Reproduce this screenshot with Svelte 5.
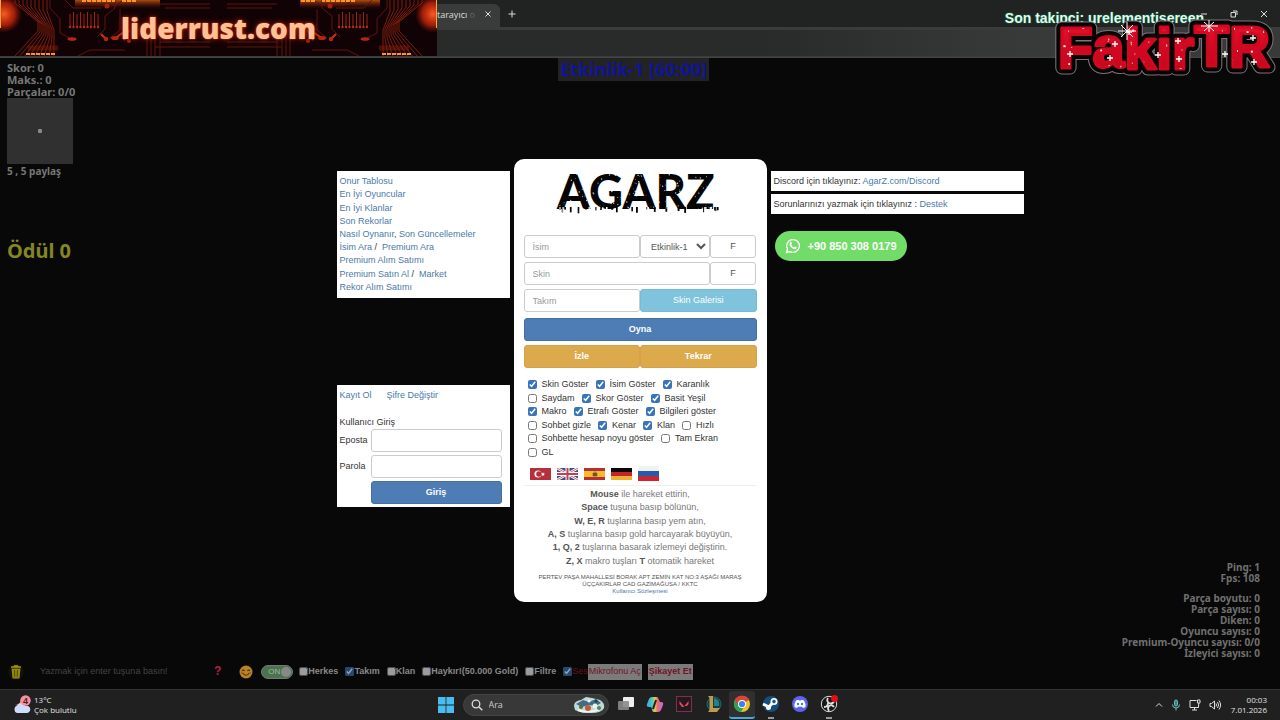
<script>
  const options = [
    [['Skin Göster', true], ['İsim Göster', true], ['Karanlık', true]],
    [['Saydam', false], ['Skor Göster', true], ['Basit Yeşil', true]],
    [['Makro', true], ['Etrafı Göster', true], ['Bilgileri göster', true]],
    [['Sohbet gizle', false], ['Kenar', true], ['Klan', true], ['Hızlı', false]],
    [['Sohbette hesap noyu göster', false], ['Tam Ekran', false]],
    [['GL', false]]
  ];
  const links = [
    [['Onur Tablosu']],
    [['En İyi Oyuncular']],
    [['En İyi Klanlar']],
    [['Son Rekorlar']],
    [['Nasıl Oynanır'], [', '], ['Son Güncellemeler']],
    [['İsim Ara'], [' / \u00a0'], ['Premium Ara']],
    [['Premium Alım Satımı']],
    [['Premium Satın Al'], [' / \u00a0'], ['Market']],
    [['Rekor Alım Satımı']]
  ];
  const help = [
    [['Mouse', 1], [' ile hareket ettirin,']],
    [['Space', 1], [' tuşuna basıp bölünün,']],
    [['W, E, R', 1], [' tuşlarına basıp yem atın,']],
    [['A, S', 1], [' tuşlarına basıp gold harcayarak büyüyün,']],
    [['1, Q, 2', 1], [' tuşlarına basarak izlemeyi değiştirin.']],
    [['Z, X', 1], [' makro tuşları '], ['T', 1], [' otomatik hareket']]
  ];
  const channels = [['Herkes', false], ['Takım', true], ['Klan', false], ['Haykır!(50.000 Gold)', false], ['Filtre', false]];
  const stats = ['Parça boyutu: 0', 'Parça sayısı: 0', 'Diken: 0', 'Oyuncu sayısı: 0', 'Premium-Oyuncu sayısı: 0/0', 'İzleyici sayısı: 0'];

  // Repeatable scatter for the speckled lettering
  function scatter(count, w, h, seed) {
    let s = seed;
    const next = () => (s = (s * 16807) % 2147483647) / 2147483647;
    return Array.from({ length: count }, () => ({ x: next() * w, y: next() * h, r: next() }));
  }
  const grunge = scatter(230, 166, 40, 77);
  const glitter = scatter(110, 214, 54, 421);
  const drips = scatter(46, 160, 6, 913);
  const traces = Array.from({ length: 9 }, (_, i) => i);
  const crosses = [[20, 46], [65, 36], [79, 24], [108, 47], [129, 51], [128, 33], [175, 46], [203, 30], [204, 54], [60, 50]];
</script>

<div class="page">
  <header class="browser">
    <div class="tabs">
      <div class="tab"><span>u tarayıcı <i>o</i></span><button aria-label="Sekmeyi kapat"><svg width="8" height="8" viewBox="0 0 8 8"><path d="M1.5 1.5l5 5m0-5l-5 5" /></svg></button></div>
      <button class="new" aria-label="Yeni sekme"><svg width="8" height="8" viewBox="0 0 8 8"><path d="M4 .5v7M.5 4h7" /></svg></button>
      <div class="window">
        <svg width="8" height="8" viewBox="0 0 8 8"><path d="M1 4h6" /></svg>
        <svg width="8" height="8" viewBox="0 0 8 8"><path d="M1 2.5h4.500v4.500H1zM3 1h4v4" /></svg>
        <svg width="8" height="8" viewBox="0 0 8 8"><path d="M1 1l6 6m0-6L1 7" /></svg>
      </div>
    </div>
    <div class="toolbar"></div>

    <div class="banner">
      <svg width="437" height="56" viewBox="0 0 437 56" aria-hidden="true">
        <defs>
          <radialGradient id="ember"><stop offset="0" stop-color="#ff5b22" /><stop offset=".6" stop-color="#ce2609" stop-opacity=".75" /><stop offset="1" stop-color="#8d1705" stop-opacity="0" /></radialGradient>
          <linearGradient id="glow" x2="0" y2="1"><stop offset="0" stop-color="#ff7418" stop-opacity=".65" /><stop offset="1" stop-color="#821405" stop-opacity="0" /></linearGradient>
        </defs>
        <rect width="437" height="56" fill="#110305" />
        <rect x="75" width="85" height="9" fill="url(#glow)" /><rect x="300" width="80" height="9" fill="url(#glow)" />
        {#each [0, 1] as side}
          <g transform={side ? 'translate(437 0) scale(-1 1)' : ''} fill="none" stroke="#7c1c0c" stroke-width="1">
            {#each traces as i}
              <path d="M{15 + i * 4} 0V{3 + i}L{38 + i * 2} {22 + i}V{31 + i}L{14 + i * 5} 57" />
              <path d="M{70 + i * 3.500} {14 - (i % 2) * 2}V27" stroke="#9c230c" />
              <circle cx={70 + i * 3.500} cy="27" r="1.200" fill="#b92e10" stroke="none" />
            {/each}
            <path d="M65 0l8 8h28M84 0l8 5h24l8-5M50 0v8l10 11v14l12 6M115 0v8l-10 8v13l-8 8M120 9v21l-10 8M147 36v20M151 36v20M155 36v20M160 38v18M160 42h50M155 47h55M160 4h50M165 8h45M125 50H90l-12 6" stroke="#5e140b" />
            <path d="M73 39h-5M106 39l-5-5M114 39l10-7M124 40l5-10" stroke="#c6340e" stroke-width="2" />
            <ellipse cx="72" cy="39" rx="4.500" ry="1.800" fill="#b3280b" stroke="none" />
            <circle cx="106" cy="39" r="2.200" fill="#b3280b" stroke="none" /><ellipse cx="115" cy="38" rx="4" ry="2" fill="#b3280b" stroke="none" />
            <circle cx="129" cy="41" r="2" fill="#a3220b" stroke="none" /><circle cx="107" cy="6" r="2.500" fill="#a3220b" stroke="none" />
            <path d="M82 1h33M122 1h14M26 54h30" stroke="#ff9328" stroke-width="2" stroke-dasharray="4 1" />
            <path d="M28 48h30" stroke="#93200b" stroke-width="5" opacity=".45" />
            <ellipse cx="4" cy="14" rx="18" ry="19" fill="url(#ember)" stroke="none" />
            <path d="M.5 0v28" stroke="#ffa544" />
          </g>
        {/each}
      </svg>
      <strong>liderrust.com</strong>
    </div>
    <p class="follower">Son takipçi: urelementisereen</p>
    <svg class="sign" width="230" height="72" viewBox="0 0 230 72" role="img" aria-label="FakirTR">
      <defs>
        <linearGradient id="redfill" x2="0" y2="1"><stop offset="0" stop-color="#ef1730" /><stop offset=".5" stop-color="#d30822" /><stop offset="1" stop-color="#c0061b" /></linearGradient>
        <clipPath id="signclip"><text x="8" y="60" dy="0 -1 2 0 0 -3 1">FakirTR</text></clipPath>
      </defs>
      <g class="signtext">
        <text x="8" y="60" dy="0 -1 2 0 0 -3 1" stroke="#777" stroke-width="13">FakirTR</text>
        <text x="8" y="60" dy="0 -1 2 0 0 -3 1" stroke="#090203" stroke-width="11">FakirTR</text>
        <text x="8" y="60" dy="0 -1 2 0 0 -3 1" fill="url(#redfill)" stroke="#cf0920" stroke-width="3">FakirTR</text>
      </g>
      <g clip-path="url(#signclip)" fill="#fff">
        {#each glitter as p}<rect x={8 + p.x} y={12 + p.y} width={p.r > 0.7 ? 2 : 1} height={p.r > 0.4 ? 2 : 1} opacity=".9" />{/each}
      </g>
      <g stroke="#fff" stroke-width="1.300">
        {#each crosses as [x, y]}<path d="M{x - 3} {y}h6M{x} {y - 3}v6" />{/each}
        <path d="M77 14v18M68 23h18M71 17l12 12m0-12L71 29M159 12v12M151 18h17M154 14l10 9m0-9l-10 9" stroke-width="1" />
      </g>
    </svg>
  </header>

  <main class="game">
    <div class="hud">
      <section class="score">
        <p>Skor: 0</p><p>Maks.: 0</p><p>Parçalar: 0/0</p>
        <div class="map"><span></span></div>
        <p class="share">5 , 5 paylaş</p>
        <p class="prize">Ödül 0</p>
      </section>
      <h1>Etkinlik-1 [60:00]</h1>
      <section class="stats">
        <p>Ping: 1</p><p>Fps: 108</p>
        <div>{#each stats as line}<p>{line}</p>{/each}</div>
      </section>
    </div>

    <div class="menu">
      <aside class="left">
        <nav>
          {#each links as row}
            <div>{#each row as [label], i}{#if i === 1}{label}{:else}<a href="#top">{label}</a>{/if}{/each}</div>
          {/each}
        </nav>
        <form class="login">
          <div class="account"><a href="#kayit">Kayıt Ol</a><a href="#sifre">Şifre Değiştir</a></div>
          <p>Kullanıcı Giriş</p>
          <label for="mail">Eposta</label><input id="mail" type="email" />
          <label for="pass">Parola</label><input id="pass" type="password" />
          <button type="button" class="blue">Giriş</button>
        </form>
      </aside>

      <section class="card">
        <svg class="logo" width="172" height="48" viewBox="0 0 172 48" role="img" aria-label="AGARZ">
          <text x="3" y="39">AGARZ</text>
          {#each drips as d}<rect x={4 + d.x} y="37" width={1 + d.r} height={2 + d.y * 0.8} fill={d.r > 0.45 ? '#050505' : '#fff'} />{/each}
          {#each grunge as g}<circle cx={3 + g.x} cy={4 + g.y} r={0.2 + g.r * 0.6} fill="#fff" opacity=".8" />{/each}
        </svg>
        <form class="play">
          <div class="row name">
            <input placeholder="İsim" aria-label="İsim" />
            <select aria-label="Sunucu"><option>Etkinlik-1</option></select>
            <button type="button">F</button>
          </div>
          <div class="row skin"><input placeholder="Skin" aria-label="Skin" /><button type="button">F</button></div>
          <div class="row half"><input placeholder="Takım" aria-label="Takım" /><button type="button" class="cyan">Skin Galerisi</button></div>
          <button type="button" class="blue go">Oyna</button>
          <div class="row half"><button type="button" class="amber">İzle</button><button type="button" class="amber">Tekrar</button></div>
        </form>
        <div class="options">
          {#each options as row}
            <div>{#each row as [label, on]}<label><input type="checkbox" checked={on} />{label}</label>{/each}</div>
          {/each}
        </div>
        <div class="flags">
          <svg width="21" height="12" viewBox="0 0 21 12"><rect width="21" height="12" fill="#b5303b" /><circle cx="8" cy="6" r="3.600" fill="#fff" /><circle cx="9" cy="6" r="2.800" fill="#b5303b" /><path d="M13 4.200l.6 1.200 1.300.2-.9.9.2 1.300-1.200-.6-1.200.6.2-1.300-.9-.9 1.300-.2z" fill="#fff" /></svg>
          <svg width="21" height="12" viewBox="0 0 21 12"><rect width="21" height="12" fill="#3d4f88" /><path d="M0 0l21 12M21 0L0 12" stroke="#fff" stroke-width="2.500" /><path d="M0 0l21 12M21 0L0 12" stroke="#c3404f" stroke-width=".8" /><path d="M10.500 0v12M0 6h21" stroke="#fff" stroke-width="4" /><path d="M10.500 0v12M0 6h21" stroke="#c3404f" stroke-width="2" /></svg>
          <svg width="21" height="12" viewBox="0 0 21 12"><rect width="21" height="12" fill="#b92e32" /><rect y="3" width="21" height="6" fill="#efbd2e" /><path d="M9 5h4v3H9zM10 4h2" fill="#765226" stroke="#765226" stroke-width=".6" /></svg>
          <svg width="21" height="12" viewBox="0 0 21 12"><rect width="21" height="4" fill="#080808" /><rect y="4" width="21" height="4" fill="#c52329" /><rect y="8" width="21" height="4" fill="#eeb130" /></svg>
          <svg width="21" height="15" viewBox="0 0 21 15"><rect width="21" height="5" fill="#f1f2f4" /><rect y="5" width="21" height="5" fill="#285bac" /><rect y="10" width="21" height="5" fill="#c72835" /></svg>
        </div>
        <div class="help">
          {#each help as row}<p>{#each row as [text, bold]}{#if bold}<b>{text}</b>{:else}{text}{/if}{/each}</p>{/each}
        </div>
        <footer>
          <p>PERTEV PAŞA MAHALLESİ BORAK APT ZEMİN KAT NO:3 AŞAĞI MARAŞ ÜÇÇAKIRLAR CAD GAZİMAĞUSA / KKTC</p>
          <a href="#sozlesme">Kullanıcı Sözleşmesi</a>
        </footer>
      </section>

      <aside class="right">
        <p>Discord için tıklayınız: <a href="#discord">AgarZ.com/Discord</a></p>
        <p>Sorunlarınızı yazmak için tıklayınız : <a href="#destek">Destek</a></p>
        <a class="phone" href="#telefon">
          <svg width="16" height="16" viewBox="0 0 16 16"><path d="M1.500 14.500l1-3.300A6.400 6.400 0 1 1 5 13.600z" fill="none" stroke="#fff" stroke-width="1.300" /><path d="M5.200 4.200c.5-.5 1-.4 1.200.1l.5 1.200c.1.500-.6.900-.6 1.200.5 1.200 1.600 2.200 2.700 2.600.4 0 .8-.9 1.200-.8l1.300.7c.6.3-.1 1.500-.6 1.800-1 .6-2.300.1-3.300-.5C6.100 9.600 5 8.300 4.600 7c-.3-1 0-2.200.6-2.800z" fill="#fff" /></svg>
          +90 850 308 0179
        </a>
      </aside>
    </div>

    <div class="chat">
      <button class="trash" aria-label="Sohbeti temizle"><svg width="16" height="16" viewBox="0 0 16 16"><path d="M3 3h10M6 2h4" stroke="#a49d08" stroke-width="1.500" /><path d="M3.500 4.500h9l-1 10h-7z" fill="#8f8a06" /><path d="M6.500 6l.3 7M9.500 6l-.3 7" stroke="#4f4c05" /></svg></button>
      <input class="message" placeholder="Yazmak için enter tuşuna basın!" aria-label="Mesaj" />
      <b class="ask">?</b>
      <svg class="smile" width="14" height="14" viewBox="0 0 14 14"><circle cx="7" cy="7" r="6.500" fill="#b58524" /><path d="M3 6q1.200-2 2.500 0M8.500 6q1.200-2 2.500 0M3.500 8q3.500 4.500 7 0" fill="none" stroke="#4c2c0c" stroke-width="1.100" /><circle cx="2.800" cy="8" r="1" fill="#b65227" /><circle cx="11.200" cy="8" r="1" fill="#b65227" /></svg>
      <button class="toggle"><span>ON</span><i></i></button>
      <div class="channels">
        {#each channels as [label, on]}<label><input type="checkbox" checked={on} />{label}</label>{/each}
        <label class="voice"><input type="checkbox" checked />Ses</label>
      </div>
      <button class="mic">Mikrofonu Aç</button><button class="report">Şikayet Et</button>
    </div>
  </main>

  <footer class="taskbar">
    <div class="weather">
      <svg width="20" height="20" viewBox="0 0 20 20"><path d="M3 10q6 0 6-7 5 3 3 8z" fill="#efa83e" /><path d="M5 18a4 4 0 0 1 0-7.500 4.800 4.800 0 0 1 8.500.5A3.600 3.600 0 1 1 14.500 18z" fill="#cbdcff" /><circle cx="13.500" cy="5.500" r="5.200" fill="#f4929e" /><text x="11" y="9">4</text></svg>
      <div>13°C<br />Çok bulutlu</div>
    </div>
    <div class="apps">
      <svg width="16" height="16" viewBox="0 0 16 16"><path d="M0 0h7.600v7.600H0zM8.400 0H16v7.600H8.400zM0 8.400h7.600V16H0zM8.400 8.400H16V16H8.400z" fill="#48bdf0" /></svg>
      <label class="search">
        <svg width="12" height="12" viewBox="0 0 12 12"><circle cx="5" cy="5" r="3.800" fill="none" stroke="#ddd" stroke-width="1.300" /><path d="M8 8l3.300 3.300" stroke="#ddd" stroke-width="1.400" /></svg>
        <input placeholder="Ara" aria-label="Ara" />
        <svg width="32" height="18" viewBox="0 0 32 18"><path d="M1 10Q1 5 8 4l5-3 6 1 8 2q5 3 4 8-2 5-13 5T2 14z" fill="#bfd9df" /><path d="M3 8l7-4 6 2 7-3 5 4-5 3-7-1-7 2z" fill="#416e82" /><path d="M5 14q10 4 22-1" stroke="#f4f4ed" stroke-width="2" fill="none" /><circle cx="8" cy="11" r="2" fill="#497640" /><circle cx="15" cy="12" r="3" fill="#c4593f" /><circle cx="22" cy="10" r="2.500" fill="#f0f1eb" /><circle cx="26" cy="12" r="2" fill="#568450" /><circle cx="16" cy="5" r="1.500" fill="#fff" /><circle cx="23" cy="5" r="1.500" fill="#233d4c" /></svg>
      </label>
      <div class="icons">
        <span><svg width="18" height="18" viewBox="0 0 18 18"><rect x="6" y="2" width="11" height="10" rx="1" fill="#eee" /><rect x="1" y="6" width="11" height="9" rx="1" fill="#8a8a8a" opacity=".9" /></svg></span>
        <span><svg width="18" height="18" viewBox="0 0 18 18"><defs><linearGradient id="cop"><stop offset="0" stop-color="#31a6f5" /><stop offset=".35" stop-color="#54cbb6" /><stop offset=".5" stop-color="#ecc84a" /><stop offset=".65" stop-color="#ef6d6c" /><stop offset="1" stop-color="#bd67ec" /></linearGradient></defs><path d="M6 2h5q1 0 2 3l1 2h1q3 0 2 3l-2 5q-1 2-3 2H8q-2 0-2-3l-1-2H3q-3 0-2-3l2-5q1-2 3-2z" fill="url(#cop)" /><path d="M10 5L7 14" stroke="#202124" stroke-width="2" /></svg></span>
        <span><svg width="18" height="18" viewBox="0 0 18 18"><rect x="1.500" y="1.500" width="15" height="15" fill="#251820" stroke="#77344a" /><path d="M4.500 6l5 6h-2.500l-2.500-3zM13.500 6v3l-1.500 2h-2.500z" fill="#e84761" /></svg></span>
        <span><svg width="18" height="18" viewBox="0 0 18 18"><circle cx="10" cy="9" r="7" fill="#143e42" stroke="#276766" /><path d="M4 1h5v12h7l-3 4H4l1.500-2V3z" fill="#bd9a4d" /><path d="M10 3q6 1 5 8h-5z" fill="#278087" /></svg></span>
        <span class="active"><svg width="18" height="18" viewBox="0 0 18 18"><circle cx="9" cy="9" r="8" fill="#eac132" /><path d="M9 9L2 5a8 8 0 0 1 14 0z" fill="#dc4337" /><path d="M9 9L2 5a8 8 0 0 0 6 12l4-7z" fill="#2fa24f" /><path d="M9 5h7a8 8 0 0 0-14 0l3 5z" fill="#dc4337" /><circle cx="9" cy="9" r="4" fill="#fff" /><circle cx="9" cy="9" r="3.100" fill="#3984e8" /></svg></span>
        <span class="open"><svg width="18" height="18" viewBox="0 0 18 18"><circle cx="9" cy="9" r="8" fill="#164c7e" /><path d="M1 9l6 3 3-3.500" fill="none" stroke="#fff" stroke-width="3" /><circle cx="12" cy="6.500" r="3.500" fill="#fff" /><circle cx="12" cy="6.500" r="2" fill="#164c7e" stroke="#fff" stroke-width=".5" /><circle cx="6.500" cy="12.500" r="2.500" fill="#fff" /></svg></span>
        <span><svg width="18" height="18" viewBox="0 0 18 18"><circle cx="9" cy="9" r="8" fill="#5965e8" /><path d="M5 5.500l2.500-.8.500.8h2l.500-.8 2.500.8q2 3 1.500 6.500l-2.500 1-.8-1.300H6.800L6 13l-2.500-1Q3 8.500 5 5.500z" fill="#fff" /><ellipse cx="7" cy="9" rx="1.100" ry="1.300" fill="#5965e8" /><ellipse cx="11" cy="9" rx="1.100" ry="1.300" fill="#5965e8" /></svg></span>
        <span class="open"><svg width="18" height="18" viewBox="0 0 18 18"><circle cx="9" cy="9" r="7.700" fill="#171717" stroke="#ddd" /><path d="M8 3q-2 3 1 5 3 1 5-1M4 12q4 0 4-4M14 12q-2-3-5-1-2 2 0 5" fill="none" stroke="#ddd" stroke-width="1.800" /><circle cx="14.500" cy="3.500" r="3.500" fill="#e60d12" /></svg></span>
      </div>
    </div>
    <div class="tray">
      <svg width="8" height="8" viewBox="0 0 8 8"><path d="M1 5.500l3-3 3 3" /></svg>
      <svg class="teal" width="10" height="12" viewBox="0 0 10 12"><rect x="3.500" y="1" width="3" height="6" rx="1.500" fill="#387d80" /><path d="M1.500 5.500q0 3.500 3.500 3.500t3.500-3.500M5 9v2.500" /></svg>
      <svg width="12" height="12" viewBox="0 0 12 12"><path d="M7.500 1.500H1v7h8.500V6M3 11h5M5.500 8.500V11M8.500 1h2.500v3H8.500zM9.700 4v2.500" /></svg>
      <svg width="12" height="12" viewBox="0 0 12 12"><path d="M1 4.500h1.500l3-2.500v8l-3-2.500H1zM7 4.500q1 1.500 0 3M8.500 3q2.200 3 0 6M10 1.500q3.200 4.500 0 9" /></svg>
      <time>00:03<br />7.01.2026</time>
    </div>
  </footer>
</div>

<style>
  :global(body) { margin: 0; background: #080808; }
  * { box-sizing: border-box; }
  p, h1 { margin: 0; }
  svg { display: block; flex: none; }
  a { color: #4b79a9; text-decoration: none; }
  button, input, select { margin: 0; font: inherit; }
  input::placeholder { color: #999; opacity: 1; }
  .page { min-height: 100vh; display: flex; flex-direction: column; overflow: hidden; font: 9px/13px "Liberation Sans", Arial, sans-serif; color: #333; }

  .browser { position: relative; height: 58px; background: #3a3b3b; border-bottom: 1px solid #444; }
  .tabs { height: 27px; display: flex; align-items: center; background: #202322; color: #ddd; padding-left: 340px; }
  .tabs button { display: flex; padding: 0; border: 0; background: none; }
  .tabs svg { stroke: #ddd; fill: none; }
  .tab { align-self: flex-end; width: 160px; height: 23px; display: flex; align-items: center; justify-content: flex-end; gap: 9px; padding: 0 8px 3px; background: #3a3b3b; border-radius: 6px 6px 0 0; font-family: "Open Sans", sans-serif; font-size: 9px; }
  .tab i { font-style: normal; color: #666; }
  .new { margin-left: 8px; }
  .window { display: flex; gap: 22px; margin-left: auto; padding-right: 12px; }
  .toolbar { height: 26px; margin-top: 3px; background: #2b2b2b; background: linear-gradient(90deg, #292a2a 60%, #383939 80%); }
  .banner { position: absolute; left: 0; top: 0; width: 437px; height: 56px; display: grid; overflow: hidden; }
  .banner svg, .banner strong { grid-area: 1 / 1; }
  .banner strong { place-self: center; color: #ffc294; font: 800 28px/54px "Open Sans", sans-serif; text-shadow: 0 0 2px #f33b20, 0 0 6px #9e1b0b; z-index: 1; }
  .follower { position: absolute; right: 76px; top: 9px; font-size: 14px; line-height: 18px; font-weight: bold; color: #dffbed; text-shadow: 0 0 2px #12834e; }
  .sign { position: absolute; right: 0; top: 8px; z-index: 1; }
  .sign text { font: bold 57px "Liberation Sans", sans-serif; stroke-linejoin: round; }

  .game { flex: 1; display: grid; grid-template: 1fr 35px / 1fr; background: #080808; }
  .hud { grid-area: 1 / 1 / 3 / 2; display: grid; grid-template-columns: 1fr auto 1fr; padding: 0 20px 30px 7px; font-family: "Noto Sans", sans-serif; font-weight: bold; color: #777; }
  .score { font-size: 11px; line-height: 12px; padding-top: 4px; }
  .map { width: 66px; height: 66px; display: grid; place-items: center; background: #303030; }
  .map span { width: 4px; height: 4px; background: #888; border-radius: 1px; }
  .share { font-size: 10px; line-height: 14px; }
  .prize { margin-top: 60px; color: #85861f; font-size: 20px; line-height: 26px; }
  h1 { align-self: start; padding: 0 2px; background: #232323; color: #101594; font-size: 18px; line-height: 23px; }
  .stats { align-self: end; text-align: right; font-size: 10px; line-height: 11px; color: #707070; }
  .stats div { margin-top: 9px; }

  .menu { grid-area: 1 / 1 / 3 / 2; z-index: 1; display: grid; grid-template-columns: 1fr 253px 1fr; gap: 4px; padding-top: 101px; align-items: start; justify-self: center; }
  .game .menu { width: 100%; }
  .left { justify-self: end; width: 173px; padding-top: 12px; display: grid; gap: 87px; }
  nav, .login { background: #fff; padding: 4px 3px; }
  nav { display: grid; grid-auto-rows: 1fr; min-height: 127px; align-items: center; }
  .login { display: grid; grid-template-columns: 28px 131px; column-gap: 3px; row-gap: 3px; align-items: center; padding-bottom: 3px; }
  .account { grid-column: 1 / 3; display: flex; gap: 15px; padding-bottom: 11px; }
  .login p { grid-column: 1 / 3; margin-bottom: -3px; }
  .login .blue { grid-column: 2; }
  .login input, .row input, .row select, .row button, .blue { height: 23px; border: 1px solid #ccc; border-radius: 3px; background: #fff; color: #555; padding: 0 8px; min-width: 0; width: 100%; }
  .card { background: #fff; border-radius: 10px; padding: 10px 10px 7px; }
  .logo { margin: 1px auto 0; height: 48px; }
  .logo text { font: 900 47px "Lato", sans-serif; fill: #050505; }
  .play { margin-top: 17px; display: grid; gap: 4px; }
  .row { display: grid; }
  .name { grid-template-columns: 117fr 70fr 47fr; }
  .skin { grid-template-columns: 187fr 47fr; }
  .half { grid-template-columns: 1fr 1fr; }
  .row select { padding: 0 0 0 6px; }
  .row .cyan { background: #7fc4dc; border-color: #73bcd6; color: #fff; }
  .row .amber { background: #dda94d; border-color: #d7a145; color: #fff; font-weight: bold; }
  .play .blue, .login .blue { background: #4e7cb5; border-color: #44719f; color: #fff; font-weight: bold; }
  .play .go { margin-top: 2px; }
  .options { margin-top: 10px; min-height: 81px; display: grid; grid-auto-rows: 1fr; padding-left: 4px; }
  .options div { display: flex; align-items: center; gap: 7px; }
  .options label { display: flex; align-items: center; gap: 5px; }
  input[type='checkbox'] { width: 9px; height: 9px; accent-color: #3873bd; flex: none; }
  .flags { display: flex; align-items: center; gap: 6px; margin-top: 7px; padding: 0 6px 4px; border-bottom: 1px solid #eee; }
  .help { margin-top: 2px; min-height: 80px; display: grid; grid-auto-rows: 1fr; align-items: center; text-align: center; color: #777; }
  .help b { color: #555; }
  .card footer { margin-top: 6px; font-size: 6px; line-height: 7px; text-align: center; color: #555; }
  .right { padding-top: 12px; width: 253px; max-width: 100%; display: grid; gap: 3px; justify-items: start; }
  .right p { width: 100%; background: #fff; padding: 4px 3px 3px; }
  .phone { margin: 14px 0 0 4px; height: 30px; border-radius: 15px; background: #72dc68; color: #fff; display: flex; align-items: center; gap: 7px; padding: 0 10px; font-size: 11px; font-weight: bold; }

  .chat { grid-area: 2 / 1; z-index: 1; justify-self: start; display: flex; align-items: center; padding-left: 8px; color: #888; }
  .chat button { border: 0; padding: 0; }
  .trash { background: #111; border-radius: 50%; }
  .message { width: 176px; margin-left: 14px; border: 0; background: none; color: #888; }
  .message::placeholder { color: #444; }
  .ask { color: #b51f47; font-size: 12px; margin-right: 18px; }
  .toggle { width: 32px; height: 14px; margin: 0 6px 0 8px; border-radius: 7px; display: flex; align-items: center; justify-content: space-between; background: #4b7350; color: #a4b4a4; font-size: 8px; }
  .chat .toggle { padding: 0 1px 0 6px; border: 1px solid #777; }
  .toggle i { width: 10px; height: 10px; border-radius: 50%; background: #888; }
  .channels { display: flex; gap: 7px; font-weight: bold; }
  .channels label { display: flex; align-items: center; }
  .channels input { opacity: .6; }
  .channels .voice { color: #68101b; font-weight: normal; }
  .mic, .report { height: 16px; background: #7b7b7b; color: #711225; }
  .report { margin-left: 6px; font-weight: bold; }
  .chat .mic, .chat .report { padding: 0 1px; }

  .taskbar { min-height: 31px; display: grid; grid-template-columns: 1fr auto 1fr; align-items: center; padding: 0 13px 0 12px; background: #202020; border-top: 1px solid #333; color: #e2e2e2; font: 9px/10px "Open Sans", sans-serif; }
  .weather, .apps, .icons, .tray { display: flex; align-items: center; }
  .weather { gap: 2px; font-size: 8px; }
  .weather text { font: bold 9px "Liberation Sans", sans-serif; fill: #591a27; }
  .search { width: 146px; height: 22px; display: flex; align-items: center; gap: 6px; margin: 0 4px 0 9px; padding: 0 3px 0 7px; border-radius: 11px; background: #383838; border: 1px solid #444; }
  .search input { min-width: 0; flex: 1; padding: 0; border: 0; background: none; color: #ddd; }
  .search input::placeholder { color: #ccc; }
  .icons { gap: 3px; }
  .icons span { width: 26px; height: 28px; display: grid; place-items: center; border-radius: 3px; border-bottom: 2px solid transparent; }
  .icons .active { background: #303030; border-color: #4aa7df; }
  .icons .open { border-image: linear-gradient(90deg, transparent 40%, #999 40% 60%, transparent 60%) 2; }
  .tray { justify-content: flex-end; gap: 8px; font-size: 8px; }
  .tray svg { fill: none; stroke: #ddd; stroke-width: 1; }
  .tray .teal { stroke: #71bfc0; }
  .tray time { margin-left: 2px; text-align: right; }
</style>
